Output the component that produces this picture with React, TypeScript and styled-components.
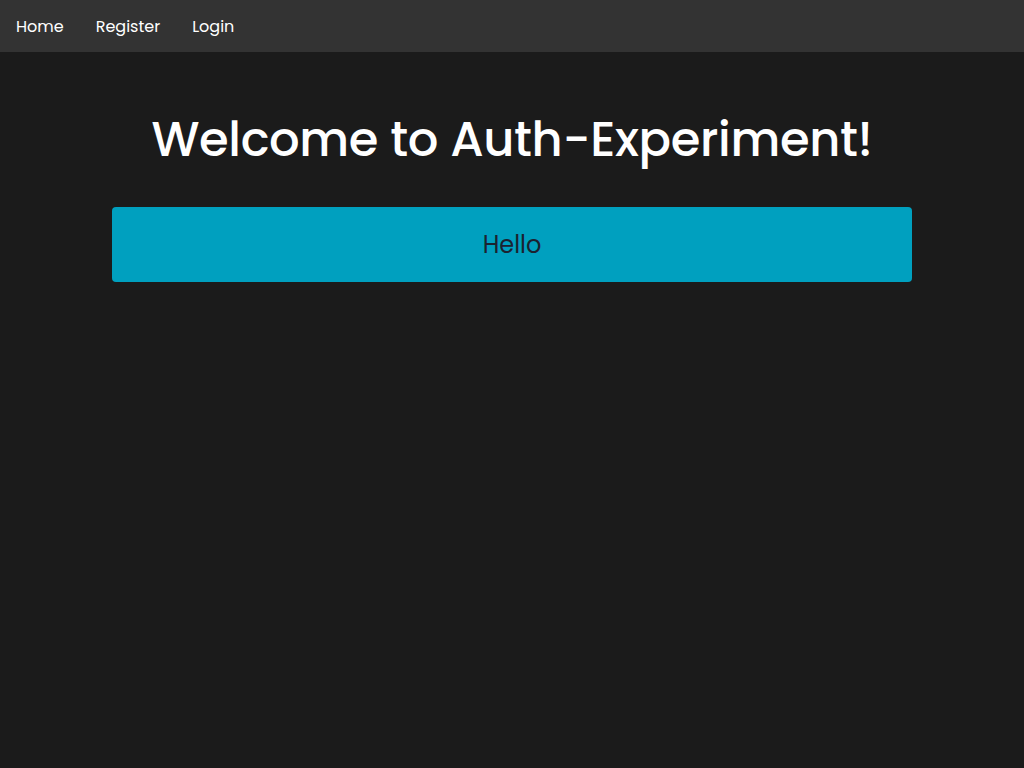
import React from 'react';
import styled, { createGlobalStyle } from 'styled-components';

const GlobalStyle = createGlobalStyle`
  * {
    box-sizing: border-box;
  }

  html,
  body {
    margin: 0;
    padding: 0;
    background-color: #1b1b1b;
    font-family: Poppins, Inter, 'Open Sans', sans-serif;
  }
`;

export default function App() {
  return (
    <>
      <GlobalStyle />
      <PageStyles>
        <NavBar>
          <NavLink href="#">Home</NavLink>
          <NavLink href="#">Register</NavLink>
          <NavLink href="#">Login</NavLink>
        </NavBar>
        <Main>
          <Title>Welcome to Auth-Experiment!</Title>
          <HelloCard>Hello</HelloCard>
        </Main>
      </PageStyles>
    </>
  );
}

const PageStyles = styled.div`
  min-height: 100vh;
  background-color: #1b1b1b;
`;

const NavBar = styled.nav`
  height: 52px;
  padding: 0 16px;
  display: flex;
  align-items: center;
  gap: 32px;
  background-color: #333333;
`;

const NavLink = styled.a`
  font-size: 16px;
  color: #ffffff;
  text-decoration: none;
`;

const Main = styled.main`
  padding: 52px 0 0;
  display: flex;
  flex-direction: column;
  align-items: center;
`;

const Title = styled.h1`
  margin: 0;
  font-size: 48px;
  font-weight: 500;
  letter-spacing: -0.35px;
  line-height: 72px;
  color: #ffffff;
`;

const HelloCard = styled.div`
  margin: 31px 0 0;
  width: 800px;
  height: 75px;
  display: flex;
  justify-content: center;
  align-items: center;
  font-size: 24px;
  color: #1c2230;
  background-color: #00a0bf;
  border-radius: 4px;
`;
